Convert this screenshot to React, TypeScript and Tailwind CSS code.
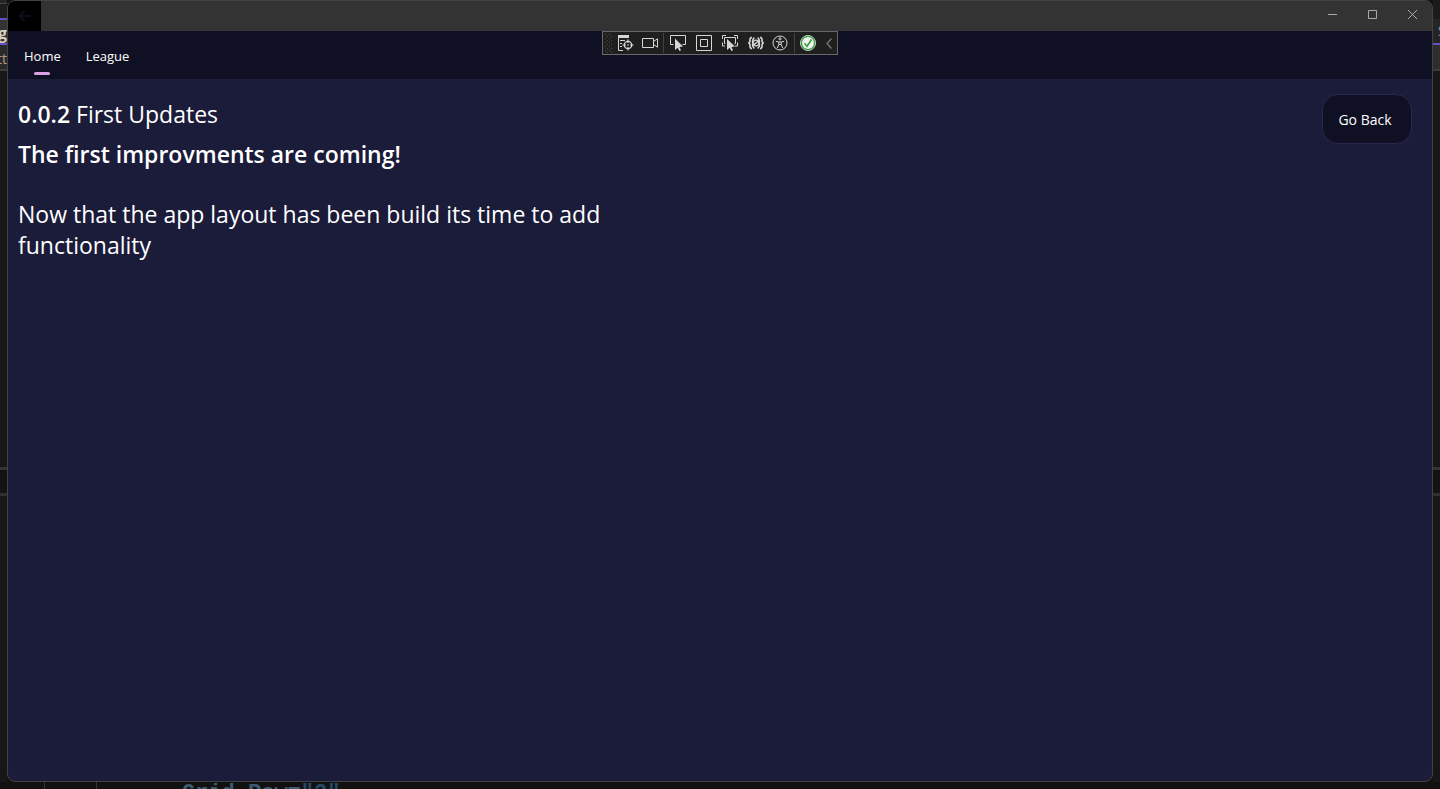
import type { ReactNode } from "react";

function BackdropLeft() {
  return (
    <div aria-hidden="true" className="flex w-[7px] shrink-0 flex-col overflow-hidden bg-[#171717]">
      <div className="h-[3px] bg-[#252525]" />
      <div className="h-px bg-[#484848]" />
      <div className="h-[14px] bg-[#1c1c1c]" />
      <div className="h-0.5 bg-[#6350c8]" />
      <div className="flex h-[23px] items-center justify-end bg-[#333333] pt-0.5 font-['Open_Sans',sans-serif] text-base font-bold text-[#d8d0c4]">
        g
      </div>
      <div className="h-0.5 bg-[#6350c8]" />
      <div className="flex h-6 items-center justify-end bg-[#2a2a2a] pt-1 font-['Open_Sans',sans-serif] text-sm text-[#b09c84]">
        tt
      </div>
      <div className="h-0.5 bg-[#3c3c3c]" />
      <BackdropPanels />
    </div>
  );
}

function BackdropRight() {
  return (
    <div aria-hidden="true" className="flex w-[7px] shrink-0 flex-col overflow-hidden bg-[#171717]">
      <div className="h-[19px] bg-[#1b1b1b]" />
      <div className="flex h-6 items-center bg-[#252525] pl-[5px] font-['Open_Sans',sans-serif] text-sm text-[#6fa0b8]">
        S
      </div>
      <div className="h-0.5 bg-[#6350c8]" />
      <div className="h-6 bg-[#2e2e2e]" />
      <div className="h-0.5 bg-[#3c3c3c]" />
      <BackdropPanels />
    </div>
  );
}

function BackdropPanels() {
  return (
    <>
      <div className="h-[396px] shrink-0 bg-[#171717]" />
      <div className="h-[3px] shrink-0 bg-[#343434]" />
      <div className="h-[23px] shrink-0 bg-[#131313]" />
      <div className="h-[3px] shrink-0 bg-[#303030]" />
    </>
  );
}

function ToolButton({ label, width, children }: { label: string; width: number; children: ReactNode }) {
  return (
    <button type="button" aria-label={label} className="flex h-[22px] shrink-0 items-center justify-center" style={{ width }}>
      {children}
    </button>
  );
}

function DebugToolbar() {
  return (
    <div
      role="toolbar"
      aria-label="Debug tools"
      className="absolute top-0 left-1/2 flex h-6 w-[236px] -translate-x-1/2 items-center border border-[#686868] bg-[#1f1f1f] text-[#d6d6d6]"
    >
      <svg width="10" height="20" viewBox="0 0 10 20" fill="#4c4c4c" className="shrink-0">
        {[1, 5, 9, 13, 17].map((y) => (
          <g key={y}>
            <rect x="2" y={y} width="1" height="1" />
            <rect x="6" y={y} width="1" height="1" />
            <rect x="4" y={y + 2} width="1" height="1" />
            <rect x="8" y={y + 2} width="1" height="1" />
          </g>
        ))}
      </svg>
      <ToolButton label="Live visual tree" width={24}>
        <svg width="18" height="18" viewBox="0 0 18 18" fill="none" stroke="currentColor">
          <path d="M2 2.500h11" strokeWidth="3" />
          <path d="M2.500 4v12.500H7M4 6.500h5M4 9.500h2M4 12.500h2" />
          <circle cx="12" cy="11" r="3.700" strokeWidth="1.300" />
          <path d="M12 5.500v3.500M12 13v3.500M6.500 11H10M14 11h3.500" strokeWidth="1.200" />
          <circle cx="12" cy="11" r="0.800" fill="currentColor" stroke="none" />
        </svg>
      </ToolButton>
      <ToolButton label="Record" width={26}>
        <svg width="18" height="18" viewBox="0 0 18 18" fill="none" stroke="currentColor">
          <path d="M1.500 4.500h11v9h-11z" />
          <path d="M12.500 7.500L16.500 4.800v8.400L12.500 10.500" />
        </svg>
      </ToolButton>
      <span className="h-5 w-px bg-[#424242]" />
      <ToolButton label="Select element" width={28}>
        <svg width="18" height="18" viewBox="0 0 18 18" fill="none" stroke="currentColor">
          <path d="M4.500 10.500h-3v-9h15v9h-3" />
          <path d="M6 4.500v11.500l2.800-2.300 1.500 3.300 1.700-.8-1.500-3.200 3.500-.5z" fill="currentColor" stroke="none" />
        </svg>
      </ToolButton>
      <ToolButton label="Display layout adorners" width={25}>
        <svg width="18" height="18" viewBox="0 0 18 18" fill="none" stroke="currentColor">
          <path d="M1.500 1.500h15v15h-15zM5.500 5.500h7v7h-7z" />
        </svg>
      </ToolButton>
      <ToolButton label="Track focused element" width={27}>
        <svg width="18" height="18" viewBox="0 0 18 18" fill="none" stroke="currentColor">
          <path d="M1.500 5V1.500H5M13 1.500h3.500V5M1.500 8.500v3.500H4M14 12h2.500V8.500" />
          <path d="M4.500 9.500h-1v-6h11v6h-1" />
          <path d="M6 5v11l2.800-2.300 1.500 3.300 1.700-.8-1.500-3.200 3.500-.5z" fill="currentColor" stroke="none" />
        </svg>
      </ToolButton>
      <ToolButton label="Binding failures" width={25}>
        <svg width="16" height="16" viewBox="0 0 16 16" fill="none" stroke="currentColor">
          <path d="M4 2.500H3L2 4v2.500L.8 8 2 9.500V12l1 1.500h1M12 2.500h1L14 4v2.500L15.200 8 14 9.500V12l-1 1.500h-1" strokeWidth="1.600" />
          <path d="M6.300 2.500L4.600 5v6l1.700 2.500M9.700 2.500L11.400 5v6l-1.700 2.500" strokeWidth="1.400" />
          <circle cx="8" cy="8" r="2.800" strokeWidth="1.200" />
          <path d="M5 10.500l6-5" strokeWidth="1.500" />
        </svg>
      </ToolButton>
      <ToolButton label="Accessibility scan" width={23}>
        <svg width="16" height="16" viewBox="0 0 16 16" fill="none" stroke="currentColor">
          <circle cx="8" cy="8" r="7" />
          <circle cx="8" cy="3.800" r="1.100" />
          <path d="M3.800 6.300l3 .7v2.500L5.300 13M12.200 6.300l-3 .7v2.500l1.500 3.500M6.800 7h2.400M6.900 9.800L8 9.300l1.100.5" />
        </svg>
      </ToolButton>
      <span className="ml-0.5 h-5 w-px bg-[#424242]" />
      <ToolButton label="Hot reload status" width={27}>
        <svg width="18" height="18" viewBox="0 0 18 18" fill="none">
          <circle cx="9" cy="9" r="7.500" fill="#f3f3f3" stroke="#d4d4d4" />
          <circle cx="9" cy="9" r="6.600" stroke="#38a23f" strokeWidth="1.300" />
          <path d="M5.500 9.300l2.500 3 4.500-6.800" stroke="#38a23f" strokeWidth="1.700" />
        </svg>
      </ToolButton>
      <ToolButton label="Collapse toolbar" width={16}>
        <svg width="8" height="12" viewBox="0 0 8 12" fill="none" stroke="#777777">
          <path d="M6.500 1.500L2 6.500l4.500 5" strokeWidth="1.300" />
        </svg>
      </ToolButton>
    </div>
  );
}

function TitleBar() {
  return (
    <header className="flex h-[30px] shrink-0 justify-between bg-[#333333] text-[#aaaaaa]">
      <button type="button" aria-label="Back" className="flex w-[33px] items-center justify-center bg-black text-[#131126]">
        <svg width="14" height="12" viewBox="0 0 14 12" fill="none" stroke="currentColor">
          <path d="M13 6H1.500M6.500 1l-5 5 5 5" strokeWidth="1.300" />
        </svg>
      </button>
      <div className="flex">
        <button type="button" aria-label="Minimize" className="flex w-10 items-center justify-center pb-1">
          <svg width="10" height="10" viewBox="0 0 10 10" stroke="currentColor">
            <path d="M1 5.500h9" />
          </svg>
        </button>
        <button type="button" aria-label="Maximize" className="flex w-10 items-center justify-center pb-1">
          <svg width="10" height="10" viewBox="0 0 10 10" fill="none" stroke="currentColor">
            <path d="M1.500 1.500h8v8h-8z" />
          </svg>
        </button>
        <button type="button" aria-label="Close" className="flex w-10 items-center justify-center pb-1">
          <svg width="10" height="10" viewBox="0 0 10 10" stroke="currentColor">
            <path d="M1 1l9 9M10 1l-9 9" />
          </svg>
        </button>
      </div>
    </header>
  );
}

export default function App() {
  return (
    <div className="flex min-h-screen flex-col bg-[#111111] font-['Open_Sans',sans-serif] text-white">
      <div className="flex grow">
        <BackdropLeft />
        <div className="flex grow flex-col overflow-hidden rounded-lg border border-[#424242] bg-[#1b1b3a]">
          <TitleBar />
          <nav className="relative flex h-12 shrink-0 items-start gap-[25px] bg-[#101024] px-4 pt-[15px] text-[13px] leading-5">
            <a href="#home" aria-current="page" className="flex flex-col items-center gap-1.5">
              Home
              <span className="h-[3px] w-4 rounded-full bg-[#dc9fe4]" />
            </a>
            <a href="#league">League</a>
            <DebugToolbar />
          </nav>
          <main className="flex grow items-start justify-between pt-[15px] pr-5 pl-2.5">
            <article className="w-[600px] pt-[5px] text-[23px] leading-[31px]">
              <h1>
                <span className="font-semibold">0.0.2</span> First Updates
              </h1>
              <h2 className="mt-[9px] font-semibold">The first improvments are coming!</h2>
              <p className="mt-[29px]">Now that the app layout has been build its time to add functionality</p>
            </article>
            <button type="button" className="h-[50px] w-[90px] rounded-2xl border border-[#29284b] bg-[#101024] pt-0.5 pr-1 text-sm">
              Go Back
            </button>
          </main>
        </div>
        <BackdropRight />
      </div>
      <div aria-hidden="true" className="flex h-[7px] shrink-0 overflow-hidden">
        <span className="ml-11 w-px bg-[#343434]" />
        <span className="ml-[51px] w-px bg-[#343434]" />
        <span className="ml-[85px] font-['Liberation_Mono',monospace] text-[22px] leading-6 font-bold text-[#3d5a70]">
          Grid.Row=<span className="text-[#24486c]">"2"</span>
        </span>
      </div>
    </div>
  );
}
